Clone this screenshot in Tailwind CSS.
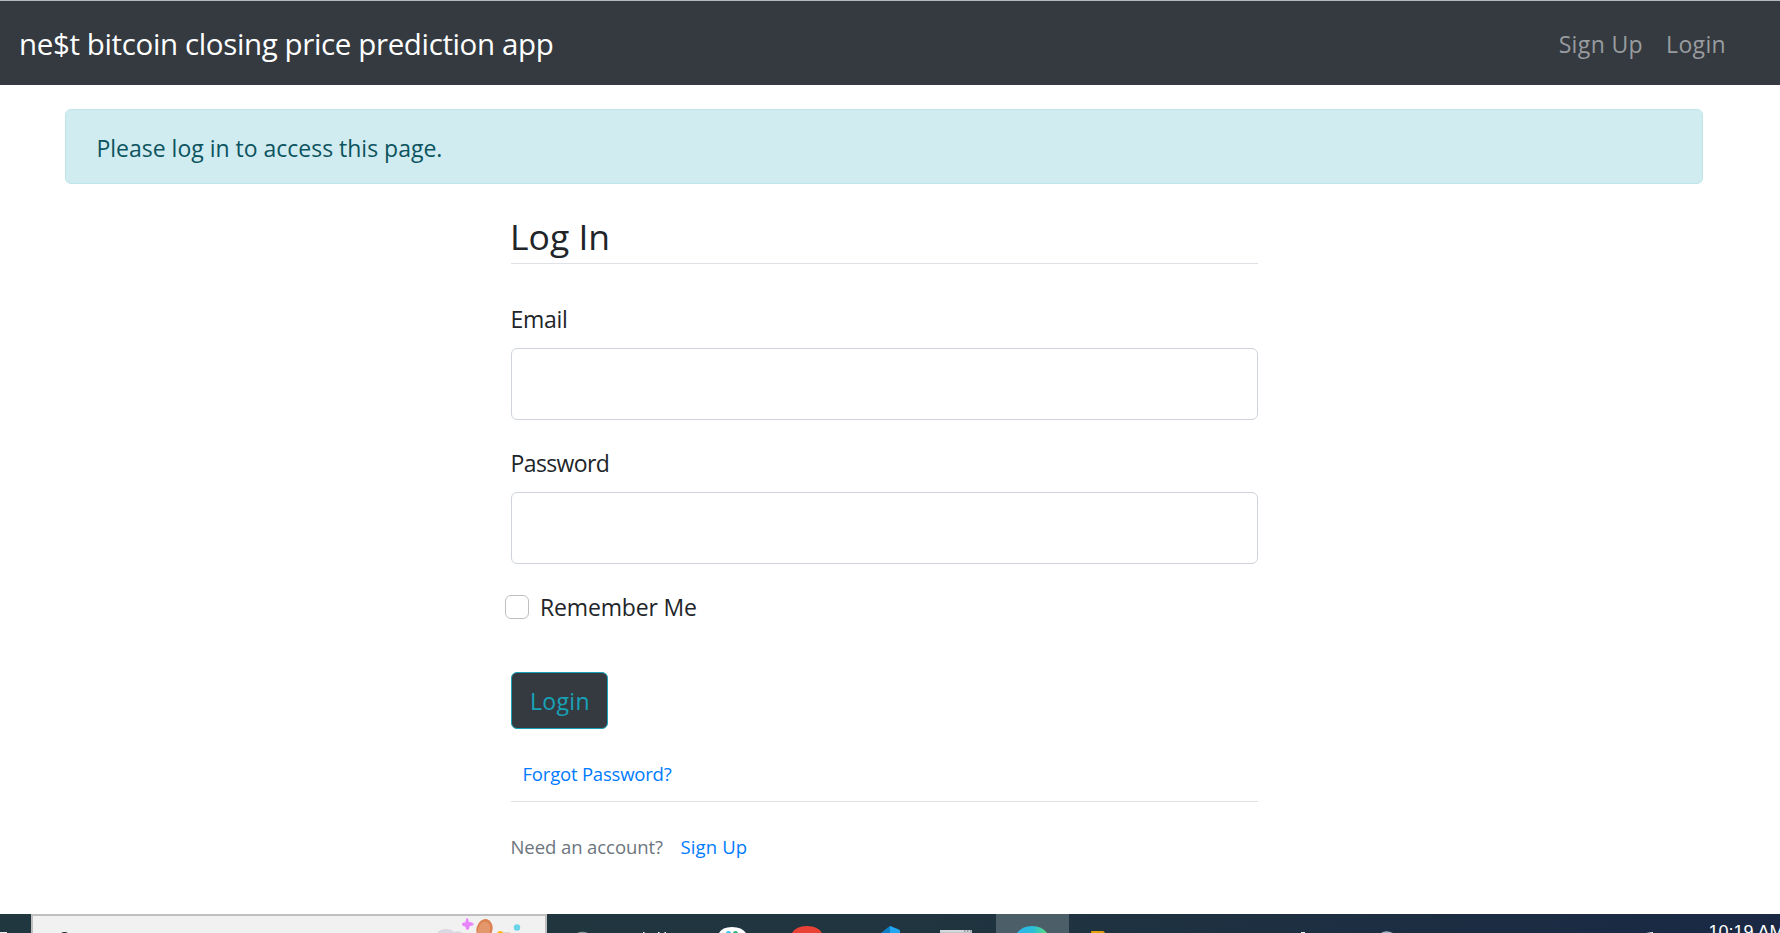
<!DOCTYPE html>
<html lang="en">
<head>
<meta charset="utf-8">
<title>Login</title>
<script src="https://cdn.jsdelivr.net/npm/@tailwindcss/browser@4"></script>
</head>
<body class="flex h-[933px] flex-col overflow-hidden bg-white font-['Open_Sans',sans-serif] text-[23px] leading-9 text-[#212529]">
  <nav class="flex h-[85px] shrink-0 items-center justify-between border-t border-[#b5b9bb] bg-[#343a40] pt-0.5 pr-[54px] pl-[19px]">
    <a class="text-[29.5px] tracking-[-0.37px] whitespace-nowrap text-white">ne$t bitcoin closing price prediction app</a>
    <div class="flex gap-[23px] text-[#999c9f]">
      <a class="tracking-[0.37px]">Sign Up</a>
      <a class="tracking-[0.34px]">Login</a>
    </div>
  </nav>

  <div class="mt-6 mr-[77px] ml-[65px] flex h-[75px] shrink-0 items-center rounded-md border border-[#bee5eb] bg-[#d1ecf1] pt-[3px] pl-[30.5px] tracking-[-0.01px] text-[#0c5460]">Please log in to access this page.</div>

  <main class="ml-[511px] flex w-[747px] grow flex-col">
    <form class="flex flex-col">
      <h1 class="mt-[30px] h-[50px] border-b border-[#dee2e6] pl-px text-[35.5px] leading-[44px] -indent-[2px]">Log In</h1>
      <label class="mt-[37px] -indent-[0.5px] tracking-[-0.3px]" for="email">Email</label>
      <input id="email" type="text" class="mt-[11px] h-[72px] rounded-md border border-[#ced4da] bg-white px-4">
      <label class="mt-[25px] -indent-[0.5px] tracking-[-0.62px]" for="password">Password</label>
      <input id="password" type="password" class="mt-[11px] h-[72px] rounded-md border border-[#ced4da] bg-white px-4">
      <div class="mt-[25px] -ml-1.5 flex items-center gap-[11px]">
        <input id="remember" type="checkbox" class="size-6 appearance-none rounded-md border border-[#bfbfbf] bg-white">
        <label for="remember" class="tracking-[-0.16px]">Remember Me</label>
      </div>
      <button type="button" class="mt-[47px] flex h-[57px] w-[97px] items-center justify-center rounded-md border border-[#17a2b8] bg-[#343a40] pt-px pl-px tracking-[0.34px] text-[#17a2b8]">Login</button>
    </form>
    <div class="mt-[30px] h-[43px] border-b border-[#dfe0e1] pl-[11.5px] text-[18.5px] leading-[30px] tracking-[-0.2px] text-[#007bff]">Forgot Password?</div>
    <div class="mt-[30px] flex gap-[17px] text-[18.5px] leading-[30px]">
      <span class="-indent-[0.5px] tracking-[-0.08px] text-[#6c757d]">Need an account?</span>
      <a class="pl-[0.5px] tracking-[0.15px] text-[#007bff]">Sign Up</a>
    </div>
  </main>

  <footer class="relative h-[19px] shrink-0 overflow-hidden bg-linear-to-r from-[#20373f] via-[#20353f] to-[#1a2844]">
    <svg class="block" width="1780" height="19" viewBox="0 0 1780 19">
      <path d="M0 18h7v1H0z" fill="#e8ecee"/>
      <path d="M31 0h516v19H31z" fill="#bfbfbf"/>
      <path d="M33 2h512v17H33z" fill="#f1f1f1"/>
      <path d="M61 19q3.500-2 7 0z" fill="#222"/>
      <path d="M437 19q3-4 9-4t8 3q4-2 9 1z" fill="#dcd8e3"/>
      <path d="M467 4q1.500 0 1.700 4 5 .500 5 2.300-.200 1.500-4 1.700-.500 4-2.500 4-1.200-.500-2-3.500-3.200-.500-3.200-2.500 0-1.500 3.500-1.800.500-4 1.500-4.200z" fill="#e985fb"/>
      <ellipse cx="484.500" cy="15" rx="8" ry="10" fill="#dc8150" transform="rotate(15 484.500 15)"/>
      <ellipse cx="484" cy="16" rx="6" ry="8.500" fill="#e3976b" transform="rotate(15 484 16)"/>
      <path d="M497 19q2-3.500 6-1l2 1z" fill="#fbb813"/>
      <path d="M503 18h7v1h-7z" fill="#d9d6c9"/>
      <circle cx="517" cy="13.500" r="3.200" fill="#69d3e7"/>
      <path d="M577 19q5-2.500 11 0z" fill="#91999f"/>
      <path d="M643 18h1.500v1H643zM658 18h1.500v1H658zM664.500 18h1.500v1h-1.500z" fill="#fff"/>
      <path d="M719 19q3-6 13-6t14 6z" fill="#fff"/>
      <path d="M726 19q0-2 2.500-2t2.500 2z" fill="#36c5f0"/>
      <path d="M733 19q0-2 2.500-2t2.500 2z" fill="#2eb67d"/>
      <path d="M792 19q4-7 15-7t15 7z" fill="#ea4335"/>
      <path d="M881 19l8-6.500q1-1 2.500-.300V19z" fill="#0d7fc5"/>
      <path d="M890 19v-7l9 3.500q1 .500 1 1.500v2z" fill="#22a7f2"/>
      <path d="M940 16h32v3h-32z" fill="#d5d8db"/>
      <path d="M940 18h32v1h-32z" fill="#c3c7cb"/>
      <path d="M964 16.500h1.500v1H964zM967 16.500h1.500v1H967zM970 16.500h1.500v1H970z" fill="#58636b"/>
      <path d="M996 0h73v19h-73z" fill="#4c5e68"/>
      <defs><linearGradient id="edge" x1="0" x2="1"><stop offset="0" stop-color="#2cb5ee"/><stop offset=".55" stop-color="#2bc0d7"/><stop offset="1" stop-color="#5be07a"/></linearGradient></defs>
      <path d="M1017 19q5-7 15-7t15 7z" fill="url(#edge)"/>
      <path d="M1091 19v-1q0-1 1-1h11q1 0 2 2z" fill="#e3a008"/>
      <path d="M1301 18h4v1h-4z" fill="#e6e9ed"/>
      <path d="M1381 19q5-3.500 12 0z" fill="#a7b5cc"/>
      <path d="M1646 19l7-1v1z" fill="#fff"/>
    </svg>
    <span class="absolute top-[8px] left-[1708.5px] font-['Liberation_Sans',sans-serif] text-[18px] leading-[20px] whitespace-nowrap text-white">10:19 AM</span>
  </footer>
</body>
</html>
